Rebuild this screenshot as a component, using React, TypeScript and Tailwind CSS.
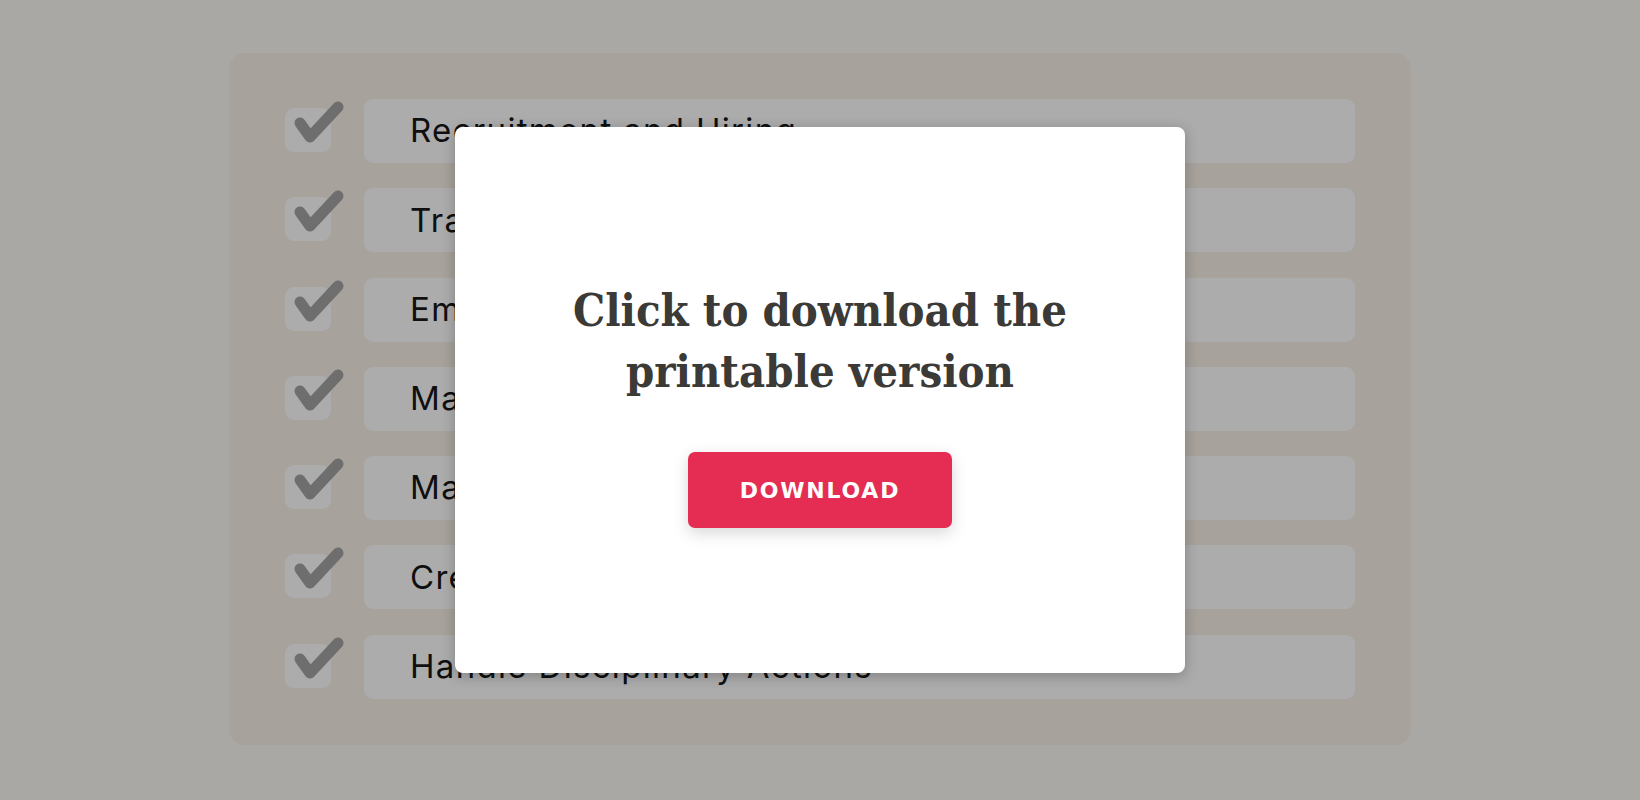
const tasks = [
  "Recruitment and Hiring",
  "Training and Development",
  "Employee Relations",
  "Manage Payroll",
  "Manage Benefits",
  "Create Company Policies",
  "Handle Disciplinary Actions",
];

function CheckBox() {
  return (
    <svg width="60" height="64" viewBox="0 0 60 64" className="shrink-0 overflow-visible">
      <rect x="0" y="9" width="46" height="44" rx="9" fill="#acacac" />
      <polyline
        points="15,24 25,38 53,8"
        fill="none"
        stroke="#6e6e6e"
        strokeWidth="11"
        strokeLinecap="round"
        strokeLinejoin="round"
      />
    </svg>
  );
}

export default function App() {
  return (
    <div className="relative w-[1640px] h-[800px] overflow-hidden bg-[#a9a8a4] pl-[229px] pt-[53px]">
      {/* Checklist behind the dialog */}
      <div className="w-[1182px] h-[692px] rounded-[16px] bg-[#a7a29b] pl-[56px] pr-[56px] pt-[46px]">
        <ul className="flex flex-col gap-[25.3px]">
          {tasks.map((t) => (
            <li key={t} className="flex items-start gap-[19px] h-16">
              <CheckBox />
              <div
                className="flex-1 h-16 rounded-[9px] bg-[#acacac] flex items-center pl-[46px] text-[33px] tracking-[0.04em] text-[#0f0f0f]"
                style={{ fontFamily: "Inter, 'Noto Sans', sans-serif" }}
              >
                {t}
              </div>
            </li>
          ))}
        </ul>
      </div>

      {/* Dialog */}
      <div className="absolute inset-0 flex items-center justify-center">
        <div className="w-[730px] h-[546px] bg-white rounded-[8px] shadow-[0_3px_14px_rgba(0,0,0,0.25)] flex flex-col items-center justify-center pt-[8px]">
          <h2
            className="text-center text-[45px] leading-[61px] font-bold text-[#3b3a36]"
            style={{ fontFamily: "'DejaVu Serif Condensed', 'DejaVu Serif', serif" }}
          >
            Click to download the
            <br />
            printable version
          </h2>
          <button
            className="mt-[50px] w-[264px] h-[76px] rounded-[7px] bg-[#e52c52] text-white text-[22px] font-bold tracking-[0.08em] shadow-[0_5px_16px_rgba(0,0,0,0.16)]"
            style={{ fontFamily: "'DejaVu Sans', sans-serif" }}
          >
            DOWNLOAD
          </button>
        </div>
      </div>
    </div>
  );
}
